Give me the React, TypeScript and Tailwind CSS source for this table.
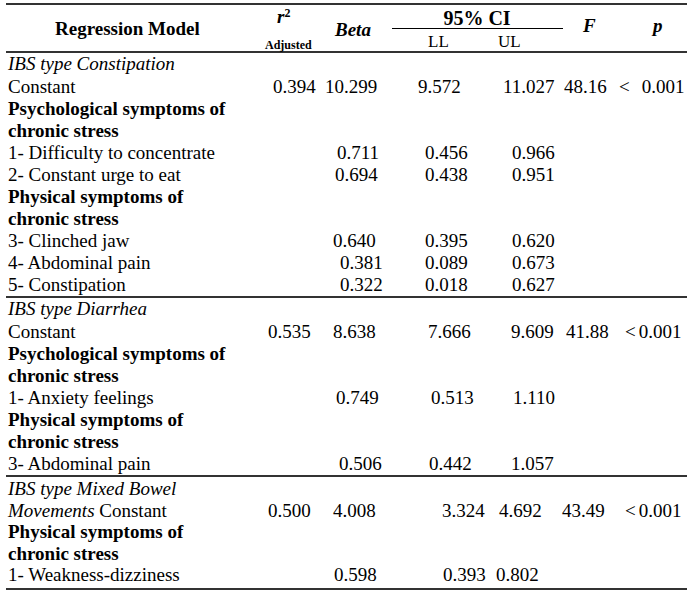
import React from 'react';

type Cell = [React.ReactNode, string] | null;
type Row = { label: React.ReactNode; cells?: Cell[]; h?: string };

// same column widths for header and body rows
const grid = 'grid grid-cols-[256px_60px_68px_87px_85px_50px_75px]';

const Less = ({ gap }: { gap: string }) => (
  <span className="flex">
    <span>&lt;</span>
    <span className={gap}>0.001</span>
  </span>
);

const psych = (
  <b>
    Psychological symptoms of
    <br />
    chronic stress
  </b>
);
const phys = (
  <b>
    Physical symptoms of
    <br />
    chronic stress
  </b>
);

const sections: Row[][] = [
  [
    { label: <i>IBS type Constipation</i> },
    {
      label: 'Constant',
      h: 'h-[23px] pt-[1px]',
      cells: [
        ['0.394', 'pl-[11px]'],
        ['10.299', 'pl-[3px]'],
        ['9.572', 'pl-[28px]'],
        ['11.027', 'pl-[26px]'],
        ['48.16', 'pl-[2px]'],
        [<Less gap="ml-[12px]" />, 'pl-[7px]'],
      ],
    },
    { label: psych, h: 'h-[44px]' },
    {
      label: '1- Difficulty to concentrate',
      cells: [null, ['0.711', 'pl-[15px]'], ['0.456', 'pl-[35px]'], ['0.966', 'pl-[35px]'], null, null],
    },
    {
      label: '2- Constant urge to eat',
      cells: [null, ['0.694', 'pl-[13px]'], ['0.438', 'pl-[35px]'], ['0.951', 'pl-[35px]'], null, null],
    },
    { label: phys, h: 'h-[44px]' },
    {
      label: '3- Clinched jaw',
      cells: [null, ['0.640', 'pl-[11px]'], ['0.395', 'pl-[35px]'], ['0.620', 'pl-[35px]'], null, null],
    },
    {
      label: '4- Abdominal pain',
      cells: [null, ['0.381', 'pl-[18px]'], ['0.089', 'pl-[35px]'], ['0.673', 'pl-[35px]'], null, null],
    },
    {
      label: '5- Constipation',
      cells: [null, ['0.322', 'pl-[18px]'], ['0.018', 'pl-[35px]'], ['0.627', 'pl-[35px]'], null, null],
    },
  ],
  [
    { label: <i>IBS type Diarrhea</i> },
    {
      label: 'Constant',
      h: 'h-[23px] pt-[1px]',
      cells: [
        ['0.535', 'pl-[6px]'],
        ['8.638', 'pl-[11px]'],
        ['7.666', 'pl-[38px]'],
        ['9.609', 'pl-[34px]'],
        ['41.88', 'pl-[4px]'],
        [<Less gap="ml-[3px]" />, 'pl-[13px]'],
      ],
    },
    { label: psych, h: 'h-[44px]' },
    {
      label: '1- Anxiety feelings',
      cells: [null, ['0.749', 'pl-[14px]'], ['0.513', 'pl-[41px]'], ['1.110', 'pl-[36px]'], null, null],
    },
    { label: phys, h: 'h-[44px]' },
    {
      label: '3- Abdominal pain',
      cells: [null, ['0.506', 'pl-[17px]'], ['0.442', 'pl-[39px]'], ['1.057', 'pl-[34px]'], null, null],
    },
  ],
  [
    { label: <i>IBS type Mixed Bowel</i>, h: 'h-[22px] pt-[1px]' },
    {
      label: (
        <>
          <i>Movements</i> Constant
        </>
      ),
      h: 'h-[22px] pt-[1px]',
      cells: [
        ['0.500', 'pl-[6px]'],
        ['4.008', 'pl-[11px]'],
        ['3.324', 'pl-[52px]'],
        ['4.692', 'pl-[22px]'],
        ['43.49', 'pl-[0px]'],
        [<Less gap="ml-[3px]" />, 'pl-[13px]'],
      ],
    },
    { label: phys, h: 'h-[44px]' },
    {
      label: '1- Weakness-dizziness',
      h: 'h-[23px] leading-[19px]',
      cells: [null, ['0.598', 'pl-[12px]'], ['0.393', 'pl-[53px]'], ['0.802', 'pl-[19px]'], null, null],
    },
  ],
];

export default function App() {
  return (
    <div className="w-[693px] h-[593px] bg-white text-black text-[19px] leading-[22px] [font-family:'Liberation_Serif','Times_New_Roman',serif] pt-[3px]">
      <div className="ml-[6px] w-[681px] border-t-2 border-b-2 border-[#333]">
        {/* header */}
        <div className={`${grid} h-[48px] border-b-2 border-[#333] text-[19px]`}>
          <div className="flex items-center pl-[49px] font-bold whitespace-nowrap">Regression Model</div>
          <div className="flex flex-col pt-[3px]">
            <span className="pl-[15px] font-bold italic leading-[18px]">
              r<sup className="text-[12px] not-italic top-[-6px]">2</sup>
            </span>
            <span className="mt-[12px] pl-[3px] text-[12px] font-bold leading-[14px] whitespace-nowrap">Adjusted</span>
          </div>
          <div className="flex items-center pl-[13px] pt-[2px] font-bold italic">Beta</div>
          <div className="col-span-2 flex flex-col">
            <div className="h-[23px] pt-[4px] text-center text-[20px] font-bold leading-[19px] pl-[2px]">95% CI</div>
            <div className="ml-[2px] mr-[-1px] border-t border-black"></div>
            <div className="flex h-[22px] pt-[4px] text-[17px] leading-[18px]">
              <span className="w-[87px] pl-[38px]">LL</span>
              <span className="pl-[21px]">UL</span>
            </div>
          </div>
          <div className="flex items-center pl-[21px] pb-[5px] font-bold italic">F</div>
          <div className="flex items-center pl-[41px] pb-[5px] font-bold italic">p</div>
        </div>

        {sections.map((rows, si) => (
          <div key={si} className={si > 0 ? 'border-t-2 border-[#333]' : ''}>
            {rows.map((r, ri) => (
              <div key={ri} className={`${grid} ${r.h ?? 'h-[22px]'}`}>
                <div className="pl-[2px] whitespace-nowrap">{r.label}</div>
                {(r.cells ?? []).map((c, ci) => (
                  <div key={ci} className={`whitespace-nowrap ${c ? c[1] : ''}`}>
                    {c ? c[0] : null}
                  </div>
                ))}
              </div>
            ))}
          </div>
        ))}
      </div>
    </div>
  );
}
